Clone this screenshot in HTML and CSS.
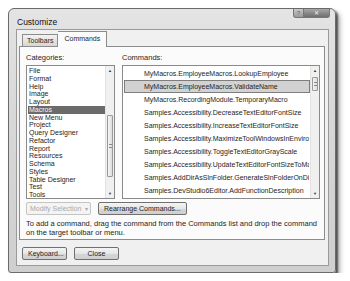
FILE: index.html
```html
<!DOCTYPE html>
<html lang="en">
<head>
    <meta charset="UTF-8">
    <title>Customize</title>
    <link rel="stylesheet" href="styles.css">
</head>
<body>
    <div class="window">
        <div class="titlebar">
            <span class="title">Customize</span>
            <div class="caption-buttons">
                <div class="cap-btn help">?</div>
                <div class="cap-btn close">&#x2715;</div>
            </div>
        </div>

        <div class="client">
            <div class="tabs">
                <div class="tab">Toolbars</div>
                <div class="tab active">Commands</div>
            </div>

            <div class="panel">
                <div class="columns">
                    <div class="column categories">
                        <div class="label">Categories:</div>
                        <div class="listbox">
                            <ul class="items">
                                <li>File</li>
                                <li>Format</li>
                                <li>Help</li>
                                <li>Image</li>
                                <li>Layout</li>
                                <li class="selected">Macros</li>
                                <li>New Menu</li>
                                <li>Project</li>
                                <li>Query Designer</li>
                                <li>Refactor</li>
                                <li>Report</li>
                                <li>Resources</li>
                                <li>Schema</li>
                                <li>Styles</li>
                                <li>Table Designer</li>
                                <li>Test</li>
                                <li>Tools</li>
                            </ul>
                            <div class="scrollbar">
                                <div class="arrow">&#x25B2;</div>
                                <div class="track">
                                    <div class="thumb cat-thumb"><span class="grip"></span></div>
                                </div>
                                <div class="arrow">&#x25BC;</div>
                            </div>
                        </div>
                    </div>

                    <div class="column commands">
                        <div class="label">Commands:</div>
                        <div class="listbox">
                            <ul class="items">
                                <li>MyMacros.EmployeeMacros.LookupEmployee</li>
                                <li class="focused">MyMacros.EmployeeMacros.ValidateName</li>
                                <li>MyMacros.RecordingModule.TemporaryMacro</li>
                                <li>Samples.Accessibility.DecreaseTextEditorFontSize</li>
                                <li>Samples.Accessibility.IncreaseTextEditorFontSize</li>
                                <li>Samples.Accessibility.MaximizeToolWindowsInEnvironment</li>
                                <li>Samples.Accessibility.ToggleTextEditorGrayScale</li>
                                <li>Samples.Accessibility.UpdateTextEditorFontSizeToMatchEnvironment</li>
                                <li>Samples.AddDirAsSlnFolder.GenerateSlnFolderOnDirStructure</li>
                                <li>Samples.DevStudio6Editor.AddFunctionDescription</li>
                            </ul>
                            <div class="scrollbar">
                                <div class="arrow">&#x25B2;</div>
                                <div class="track">
                                    <div class="thumb cmd-thumb"><span class="grip"></span></div>
                                </div>
                                <div class="arrow">&#x25BC;</div>
                            </div>
                        </div>
                    </div>
                </div>

                <div class="panel-buttons">
                    <button class="btn dropdown" disabled>Modify Selection <span class="caret">&#x25BE;</span></button>
                    <button class="btn">Rearrange Commands...</button>
                </div>

                <p class="hint">To add a command, drag the command from the Commands list and drop the command on the target toolbar or menu.</p>
            </div>

            <div class="dialog-buttons">
                <button class="btn wide">Keyboard...</button>
                <button class="btn wide">Close</button>
            </div>
        </div>
    </div>
</body>
</html>
```

FILE: styles.css
```css
* {
    margin: 0;
    padding: 0;
    box-sizing: border-box;
}

body {
    background: #ffffff;
    padding: 8px 0 0 8px;
    font-family: "Liberation Sans", Arial, sans-serif;
    font-size: 7px;
    color: #1e1e1e;
}

.window {
    width: 328px;
    height: 265px;
    background: linear-gradient(180deg, #e4e4e4 0%, #d8d8d8 40%, #cfcfcf 100%);
    border: 1px solid #6a6a6a;
    border-radius: 6px 6px 3px 3px;
    box-shadow: 2px 2px 2px rgba(0, 0, 0, 0.55), 4px 4px 5px rgba(0, 0, 0, 0.3);
    display: flex;
    flex-direction: column;
    padding: 0 6px 6px 7px;
}

.titlebar {
    height: 20px;
    display: flex;
    justify-content: space-between;
    align-items: flex-start;
}

.title {
    font-size: 8.5px;
    color: #111;
    margin-top: 8px;
    margin-left: 1px;
}

.caption-buttons {
    display: flex;
    margin-right: -1px;
}

.cap-btn {
    height: 9px;
    border: 1px solid #777;
    border-top: none;
    font-size: 6px;
    line-height: 8px;
    text-align: center;
    color: #f4f4f4;
    background: linear-gradient(180deg, #c8c8c8, #9a9a9a);
}

.help {
    width: 11px;
    border-radius: 0 0 0 3px;
    color: #666;
}

.close {
    width: 26px;
    border-left: none;
    border-radius: 0 0 3px 0;
    background: linear-gradient(180deg, #a8a8a8, #6e6e6e);
}

.client {
    flex: 1;
    background: #f0f0f0;
    border: 1px solid #9a9a9a;
    display: flex;
    flex-direction: column;
    padding: 1px 3px 0 2px;
}

.tabs {
    display: flex;
    align-items: flex-end;
    height: 15px;
    padding-left: 3px;
    position: relative;
    z-index: 1;
}

.tab {
    height: 12px;
    padding: 0 4px;
    border: 1px solid #8c8c8c;
    border-bottom: none;
    background: linear-gradient(180deg, #f2f2f2, #d6d6d6);
    line-height: 11px;
}

.tab.active {
    height: 16px;
    padding: 0 6px;
    background: #fbfbfb;
    border-left: none;
    line-height: 13px;
    margin-bottom: -1px;
}

.panel {
    height: 194px;
    background: #fbfbfb;
    border: 1px solid #8c8c8c;
    padding: 7px 4px 0 6px;
    display: flex;
    flex-direction: column;
}

.columns {
    display: flex;
    gap: 7px;
}

.label {
    height: 11px;
    line-height: 8px;
    font-size: 7.5px;
}

.categories {
    width: 89px;
    flex-shrink: 0;
}

.commands {
    flex: 1;
    min-width: 0;
}

.listbox {
    height: 134px;
    background: #ffffff;
    border: 1px solid #8a8a8a;
    display: flex;
}

.items {
    list-style: none;
    flex: 1;
    min-width: 0;
    overflow: hidden;
    padding: 1px 0 0 1px;
}

.categories .items li {
    height: 7.75px;
    line-height: 7.75px;
    padding-left: 1px;
    white-space: nowrap;
}

.categories .items li.selected {
    background: #6b6b6b;
    color: #f6f6f6;
}

.commands .items li {
    height: 13px;
    line-height: 11px;
    padding-left: 19px;
    white-space: nowrap;
    border: 1px solid transparent;
    overflow: hidden;
}

.commands .items li.focused {
    background: #d2d2d2;
    border-color: #7e7e7e;
}

.scrollbar {
    width: 9px;
    flex-shrink: 0;
    background: #f0f0f0;
    border-left: 1px solid #e2e2e2;
    display: flex;
    flex-direction: column;
}

.arrow {
    height: 9px;
    font-size: 4px;
    line-height: 9px;
    text-align: center;
    color: #333;
}

.track {
    flex: 1;
    display: flex;
    flex-direction: column;
}

.thumb {
    margin: 0 1px;
    border: 1px solid #999;
    border-radius: 1px;
    background: linear-gradient(90deg, #f6f6f6, #dcdcdc);
    display: flex;
    align-items: center;
    justify-content: center;
}

.cat-thumb {
    margin-top: 40px;
    height: 62px;
}

.cmd-thumb {
    margin-top: 2px;
    height: 14px;
}

.grip {
    width: 3px;
    height: 4px;
    border-top: 1px solid #888;
    border-bottom: 1px solid #888;
}

.panel-buttons {
    display: flex;
    gap: 7px;
    margin-top: 3px;
}

.btn {
    font-family: "Liberation Sans", Arial, sans-serif;
    font-size: 7px;
    color: #1e1e1e;
    height: 13px;
    padding: 0 5px;
    border: 1px solid #707070;
    border-radius: 2px;
    white-space: nowrap;
    background: linear-gradient(180deg, #f4f4f4 0%, #e6e6e6 50%, #d6d6d6 51%, #cfcfcf 100%);
}

.btn.dropdown {
    width: 65px;
    color: #a8a8a8;
    border-color: #c4c4c4;
    background: #f4f4f4;
    text-align: left;
    padding-left: 3px;
    overflow: hidden;
}

.caret {
    font-size: 6px;
    margin-left: 2px;
}

.hint {
    margin-top: 4px;
    line-height: 9px;
    width: 296px;
    font-size: 7.5px;
}

.dialog-buttons {
    display: flex;
    gap: 7px;
    padding: 7px 0 0 3px;
}

.btn.wide {
    width: 45px;
    height: 13px;
}
```
